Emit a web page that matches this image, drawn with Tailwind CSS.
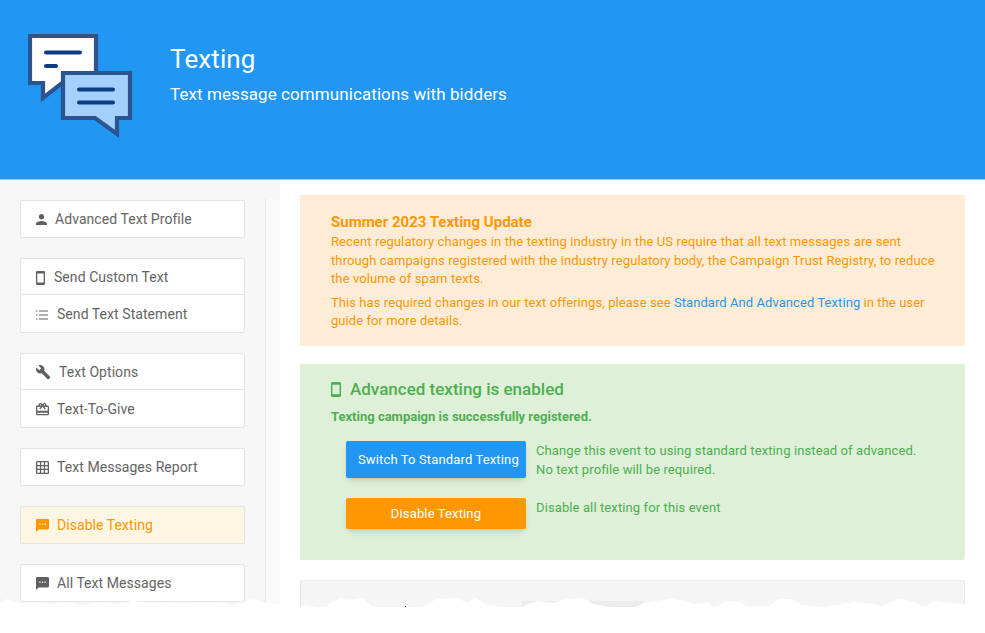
<!DOCTYPE html>
<html><head><meta charset="utf-8"><script src="https://cdn.jsdelivr.net/npm/@tailwindcss/browser@4"></script></head>
<body class="bg-white font-['Roboto',sans-serif] text-[14px] tracking-[0.06px]">
<div class="relative w-[985px] h-[633px] overflow-hidden bg-white">
<header class="h-[180px] bg-[#2196f3] border-b border-[#90caf9] flex text-white">
<svg class="ml-[28px] mt-[34px] w-[105px] h-[107px]" viewBox="0 0 105 107"><path d="M2 2H68V49H34L15 64V49H2Z" fill="#fff" stroke="#2c5491" stroke-width="4.200"/><path d="M35 39H102V84H89V100L67 84H35Z" fill="#a3d0fd" stroke="#2c5491" stroke-width="4.200"/><path d="M18 18.500H52M18 32H28M51 55.500H85M51 68.500H85" stroke="#0a3d84" stroke-width="4" stroke-linecap="round"/></svg>
<div class="ml-[37px] mt-[43px]"><h1 class="text-[26px] leading-[32px] tracking-[0.12px]">Texting</h1><p class="mt-[9px] text-[17px] leading-[20px] tracking-[0.08px]">Text message communications with bidders</p></div>
</header>
<div class="flex">
<aside class="w-[280px] h-[453px] bg-[#f7f7f7] pl-[20px] pt-[20px] relative">
<div class="absolute left-[265px] top-[19px] bottom-0 w-[15px] bg-[#f9f9f9] border-l border-[#e6e6e6]"></div>
<nav class="w-[225px] flex flex-col gap-[20px] text-[#646464]">
<div class="bg-white border border-[#e5e5e5] rounded-[2px]"><a class="h-[36px] flex items-center pl-[15px] gap-[8px]"><svg class="w-[11px] h-[11px] fill-[#616161]" viewBox="4 4 16 16"><path d="M12 12c2.210 0 4-1.790 4-4s-1.790-4-4-4-4 1.790-4 4 1.790 4 4 4zm0 2c-2.670 0-8 1.340-8 4v2h16v-2c0-2.660-5.330-4-8-4z"/></svg>Advanced Text Profile</a></div>
<div class="bg-white border border-[#e5e5e5] rounded-[2px] divide-y divide-[#e5e5e5]"><a class="h-[36px] pt-[2px] flex items-center pl-[15px] gap-[9px]"><svg class="w-[9px] h-[14px] fill-[#616161]" viewBox="5 1 14 22" preserveAspectRatio="none"><path d="M17 1.010L7 1c-1.100 0-2 .9-2 2v18c0 1.100.9 2 2 2h10c1.100 0 2-.9 2-2V3c0-1.100-.9-1.990-2-1.990zM17 19H7V5h10v14z"/></svg>Send Custom Text</a><a class="h-[37px] pt-[2px] flex items-center pl-[15px] gap-[9px]"><svg class="w-[12px] h-[10px]" viewBox="0 0 12 10" stroke="#616161" stroke-width="1"><path d="M0 1H1.500M0 5H1.500M0 9H1.500M3 1H12M3 5H12M3 9H12"/></svg>Send Text Statement</a></div>
<div class="bg-white border border-[#e5e5e5] rounded-[2px] divide-y divide-[#e5e5e5]"><a class="h-[36px] pt-[2px] flex items-center pl-[15px] gap-[8px]"><svg class="w-[15px] h-[15px] fill-[#616161]" viewBox="1 1 23 23"><path d="M22.700 19l-9.100-9.100c.9-2.300.4-5-1.500-6.900-2-2-5-2.400-7.400-1.300L9 6 6 9 1.600 4.700C.4 7.100.9 10.100 2.900 12.100c1.900 1.900 4.600 2.400 6.900 1.500l9.100 9.100c.4.4 1 .4 1.400 0l2.300-2.300c.5-.4.5-1.100.1-1.400z"/></svg>Text Options</a><a class="h-[37px] pt-[2px] flex items-center pl-[15px] gap-[8px]"><svg class="w-[13px] h-[13px] fill-[#616161]" viewBox="2 2 20 20"><path d="M20 6h-2.180c.11-.31.18-.65.18-1 0-1.660-1.340-3-3-3-1.050 0-1.960.54-2.500 1.350l-.5.67-.5-.68C10.960 2.540 10.050 2 9 2 7.340 2 6 3.340 6 5c0 .35.07.69.18 1H4c-1.110 0-1.990.89-1.990 2L2 19c0 1.110.89 2 2 2h16c1.110 0 2-.89 2-2V8c0-1.110-.89-2-2-2zm-5-2c.55 0 1 .45 1 1s-.45 1-1 1-1-.45-1-1 .45-1 1-1zM9 4c.55 0 1 .45 1 1s-.45 1-1 1-1-.45-1-1 .45-1 1-1zm11 15H4v-2h16v2zm0-5H4V8h5.080L7 10.830 8.620 12 11 8.760l1-1.360 1 1.360L15.380 12 17 10.830 14.920 8H20v6z"/></svg>Text-To-Give</a></div>
<div class="bg-white border border-[#e5e5e5] rounded-[2px]"><a class="h-[36px] flex items-center pl-[15px] gap-[8px]"><svg class="w-[13px] h-[13px] fill-[#616161]" viewBox="2 2 20 20"><path d="M20 2H4c-1.100 0-2 .9-2 2v16c0 1.100.9 2 2 2h16c1.100 0 2-.9 2-2V4c0-1.100-.9-2-2-2zM8 20H4v-4h4v4zm0-6H4v-4h4v4zm0-6H4V4h4v4zm6 12h-4v-4h4v4zm0-6h-4v-4h4v4zm0-6h-4V4h4v4zm6 12h-4v-4h4v4zm0-6h-4v-4h4v4zm0-6h-4V4h4v4z"/></svg>Text Messages Report</a></div>
<div class="bg-[#fdf6e3] border border-[#e5e5e5] rounded-[2px] text-[#ff9800]"><a class="h-[36px] flex items-center pl-[15px] gap-[8px]"><svg class="w-[13px] h-[13px] fill-[#ff9800]" viewBox="2 2 20 20"><path d="M20 2H4c-1.100 0-1.990.9-1.990 2L2 22l4-4h14c1.100 0 2-.9 2-2V4c0-1.100-.9-2-2-2zM9 11H7V9h2v2zm4 0h-2V9h2v2zm4 0h-2V9h2v2z"/></svg>Disable Texting</a></div>
<div class="bg-white border border-[#e5e5e5] rounded-[2px]"><a class="h-[36px] flex items-center pl-[15px] gap-[8px]"><svg class="w-[13px] h-[13px] fill-[#616161]" viewBox="2 2 20 20"><path d="M20 2H4c-1.100 0-1.990.9-1.990 2L2 22l4-4h14c1.100 0 2-.9 2-2V4c0-1.100-.9-2-2-2zM9 11H7V9h2v2zm4 0h-2V9h2v2zm4 0h-2V9h2v2z"/></svg>All Text Messages</a></div>
</nav>
</aside>
<main class="w-[705px] pl-[20px] pr-[20px] pt-[15px] flex flex-col">
<section class="h-[151px] bg-[#ffecd7] rounded-[2px] pl-[31px] pr-[28px] pt-[17px] text-[#ff9800] text-[13px] tracking-[0.11px]">
<h2 class="text-[15px] leading-[20px] mb-[1px] font-bold tracking-normal">Summer 2023 Texting Update</h2>
<p class="leading-[18.500px]">Recent regulatory changes in the texting industry in the US require that all text messages are sent through campaigns registered with the industry regulatory body, the Campaign Trust Registry, to reduce the volume of spam texts.</p>
<p class="mt-[5px] leading-[18px] tracking-[0.07px]">This has required changes in our text offerings, please see <a class="text-[#2196f3]">Standard And Advanced Texting</a> in the user guide for more details.</p>
</section>
<section class="mt-[18px] h-[196px] bg-[#dff0d8] rounded-[2px] pl-[31px] pt-[15px] text-[#4caf50] text-[13px] tracking-[0.11px]">
<h2 class="flex items-center gap-[9px] text-[17px] leading-[20px] font-medium tracking-normal"><svg class="w-[10px] h-[15px] fill-[#4caf50]" viewBox="5 1 14 22" preserveAspectRatio="none"><path d="M17 1.010L7 1c-1.100 0-2 .9-2 2v18c0 1.100.9 2 2 2h10c1.100 0 2-.9 2-2V3c0-1.100-.9-1.990-2-1.990zM17 19H7V5h10v14z"/></svg>Advanced texting is enabled</h2>
<p class="mt-[9px] font-bold leading-[18px] tracking-normal">Texting campaign is successfully registered.</p>
<div class="mt-[15px] ml-[15px] flex gap-[10px]"><button class="w-[180px] h-[37px] bg-[#2196f3] text-white rounded-[2px] shadow-md pl-[12px] text-left tracking-[0.14px]">Switch To Standard Texting</button><p class="leading-[19px]">Change this event to using standard texting instead of advanced.<br>No text profile will be required.</p></div>
<div class="mt-[19px] ml-[15px] flex gap-[10px]"><button class="w-[180px] h-[31px] bg-[#ff9800] text-white rounded-[2px] shadow-md tracking-[0.14px]">Disable Texting</button><p class="leading-[19px]">Disable all texting for this event</p></div>
</section>
<section class="relative mt-[20px] h-[60px] bg-[#f5f5f5] border-x border-t border-x-[#e8e8e8] border-t-[#f0f0f0]">
<div class="absolute left-[221px] top-[20px] w-[122px] h-[20px] bg-[#ececec]"></div>
<div class="absolute left-[25px] top-[24px] w-[3px] h-[4px] bg-[#111]"></div>
<div class="absolute left-[104px] top-[25px] w-[1px] h-[3px] bg-[#333]"></div>
<div class="absolute left-[186px] top-[24px] w-[1px] h-[3px] bg-[#555]"></div>
</section>
</main>
</div>
<svg class="absolute left-0 top-[590px] w-[985px] h-[43px]" viewBox="0 590 985 43"><path fill="#fff" d="M0 602L7 599L17 603L33 602L50 604L67 602L83 605L100 602L117 604L133 601L150 603L167 602L183 604L200 602L217 602L233 605L253 599L267 603L279 605L299 607L307 605L317 608L325 606L340 598L348 600L362 598L373 607L390 607L407 607L422 607L437 599L457 598L467 603L475 598L487 605L503 607L522 607L528 604L537 601L553 603L567 599L583 598L593 604L610 607L635 607L645 603L655 601L672 599L685 601L695 604L708 603L715 607L723 603L728 601L738 602L747 606L768 606L780 599L792 599L802 605L825 607L842 604L855 602L868 603L882 606L898 599L912 601L923 607L935 601L948 603L963 604L985 606V633H0Z"/></svg>
</div>
</body></html>
